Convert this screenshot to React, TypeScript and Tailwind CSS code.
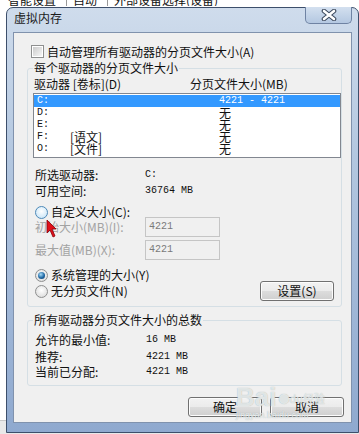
import React from 'react';

const mono = "font-['Liberation_Mono',monospace] text-[10px]";

function Radio({ checked = false, hover = false }: { checked?: boolean; hover?: boolean }) {
  return (
    <span
      className={`flex h-[13px] w-[13px] shrink-0 items-center justify-center rounded-full border ${
        hover
          ? 'border-[#4d89b8] bg-[radial-gradient(circle_at_50%_40%,#ffffff,#bfe0f6)]'
          : 'border-[#8e8f8f] bg-[radial-gradient(circle_at_50%_40%,#ffffff,#d6d6d6)]'
      }`}
    >
      {checked && (
        <span className="h-[7px] w-[7px] rounded-full bg-[radial-gradient(circle_at_40%_35%,#a8dcf8,#1f68a4_55%,#0e3660)]" />
      )}
    </span>
  );
}

function Button({ children, w = 'w-[74px]' }: { children: React.ReactNode; w?: string }) {
  return (
    <div
      className={`flex h-[20px] ${w} items-center justify-center rounded-[3px] border border-[#707070] bg-[linear-gradient(#f2f2f2_0%,#ebebeb_50%,#dddddd_50%,#cfcfcf_100%)] leading-[12px] shadow-[inset_0_0_0_1px_#fcfcfc]`}
    >
      {children}
    </div>
  );
}

function Group({ title, className, children }: { title: string; className: string; children: React.ReactNode }) {
  return (
    <fieldset className={`ml-[13px] w-[315px] rounded-[3px] border border-[#d5dfe5] ${className}`}>
      <legend className="ml-[5px] h-[12px] px-[1px] leading-[12px]">{title}</legend>
      {children}
    </fieldset>
  );
}

const drives = [
  { d: 'C:', label: '', size: '4221 - 4221', sel: true },
  { d: 'D:', label: '', size: '无' },
  { d: 'E:', label: '', size: '无' },
  { d: 'F:', label: '[语文]', size: '无' },
  { d: 'O:', label: '[文件]', size: '无' },
];

export default function App() {
  return (
    <div className="relative h-[434px] w-[359px] overflow-hidden bg-[#e9e9e9] font-['Noto_Sans_CJK_SC',sans-serif] text-[12px] text-[#111]">
      {/* window behind the dialog */}
      <div className="absolute left-0 top-0 h-[421px] w-[359px] border-b border-[#c8c8c8] bg-white">
        <div className="flex h-[6px] overflow-hidden pl-[8px] text-[12px] leading-[12px]">
          <div className="-mt-[6px] flex gap-[10px] whitespace-nowrap">
            <span>智能设置</span>
            <span className="border-l border-[#9a9a9a] pl-[6px]">自动</span>
            <span className="border-l border-[#9a9a9a] pl-[6px]">外部设备选择(设备)</span>
          </div>
        </div>
      </div>

      {/* dialog window */}
      <div className="absolute left-[6px] top-[7px] flex h-[426px] w-[353px] flex-col rounded-t-[7px] border border-[#3d4f6b] bg-[linear-gradient(#cfdcec,#b3c7e0_35%,#8fa9cf)] px-[6px] pb-[9px]">
        <div className="flex h-[24px] items-start">
          <span className="mt-[4px] pl-[1px] leading-[12px] text-[#1b1b1b]">虚拟内存</span>
          <div className="-mt-[1px] ml-auto flex h-[17px] w-[47px] items-center justify-center rounded-b-[5px] border border-t-0 border-[#6f83a3] bg-[linear-gradient(#d3e0ef,#b4c8e1)]">
            <svg width="16" height="12" viewBox="0 0 16 12">
              <path d="M3 2 L13 10 M13 2 L3 10" stroke="#3a475b" strokeWidth="4.6" strokeLinecap="round" />
              <path d="M3 2 L13 10 M13 2 L3 10" stroke="#ffffff" strokeWidth="2.6" strokeLinecap="round" />
            </svg>
          </div>
        </div>

        {/* client area */}
        <div className="flex h-[391px] flex-col border border-[#8092ad] bg-[#f0f0f0]">
          <div className="ml-[17px] mt-[12px] flex h-[13px] items-center gap-[3px]">
            <span className="flex h-[13px] w-[13px] items-center justify-center border border-[#8e8f8f] bg-white">
              <span className="h-[9px] w-[9px] bg-[linear-gradient(135deg,#cbcbcb,#f6f6f6)]" />
            </span>
            <span className="leading-[12px]">自动管理所有驱动器的分页文件大小(A)</span>
          </div>

          <Group title="每个驱动器的分页文件大小" className="mt-[4px] h-[245px]">
            <div className="mt-[4px] flex h-[12px] pl-[6px] leading-[12px]">
              <span className="w-[156px]">驱动器 [卷标](D)</span>
              <span>分页文件大小(MB)</span>
            </div>
            <div className="ml-[5px] mt-[3px] h-[65px] w-[308px] border border-[#828790] bg-white pt-[1px]">
              {drives.map((r) => (
                <div
                  key={r.d}
                  className={`flex h-[12px] items-center pl-[3px] leading-[12px] ${r.sel ? 'bg-[#3399ff] text-white' : ''}`}
                >
                  <span className="flex w-[182px]">
                    <span className={`w-[33px] ${mono}`}>{r.d}</span>
                    <span>{r.label}</span>
                  </span>
                  <span className={r.size === '无' ? '' : mono}>{r.size}</span>
                </div>
              ))}
            </div>

            <div className="mt-[11px] flex h-[12px] items-center pl-[7px] leading-[12px]">
              <span className="w-[110px]">所选驱动器:</span>
              <span className={mono}>C:</span>
            </div>
            <div className="mt-[4px] flex h-[12px] items-center pl-[7px] leading-[12px]">
              <span className="w-[110px]">可用空间:</span>
              <span className={mono}>36764 MB</span>
            </div>

            <div className="mt-[10px] flex h-[10px] items-center gap-[3px] pl-[7px] leading-[12px]">
              <Radio hover />
              <span>自定义大小(C):</span>
            </div>
            <div className="flex h-[20px] items-center pl-[7px] leading-[12px]">
              <span className="w-[110px] text-[#a3a3a3]">初始大小(MB)(I):</span>
              <span className={`flex h-[20px] w-[75px] items-center border border-[#c5c5c5] bg-[#f0f0f0] pl-[3px] text-[#7a7a7a] ${mono}`}>
                4221
              </span>
            </div>
            <div className="mt-[3px] flex h-[20px] items-center pl-[7px] leading-[12px]">
              <span className="w-[110px] text-[#a3a3a3]">最大值(MB)(X):</span>
              <span className={`flex h-[20px] w-[75px] items-center border border-[#c5c5c5] bg-[#f0f0f0] pl-[3px] text-[#7a7a7a] ${mono}`}>
                4221
              </span>
            </div>

            <div className="mt-[9px] flex h-[12px] items-center gap-[3px] pl-[7px] leading-[12px]">
              <Radio checked />
              <span>系统管理的大小(Y)</span>
            </div>
            <div className="flex h-[20px] items-center gap-[3px] pl-[7px] leading-[12px]">
              <Radio />
              <span>无分页文件(N)</span>
              <div className="ml-auto mr-[7px]">
                <Button>设置(S)</Button>
              </div>
            </div>
          </Group>

          <Group title="所有驱动器分页文件大小的总数" className="mt-[7px] h-[72px]">
            <div className="mt-[8px] flex h-[12px] items-center pl-[7px] leading-[12px]">
              <span className="w-[111px]">允许的最小值:</span>
              <span className={mono}>16 MB</span>
            </div>
            <div className="mt-[5px] flex h-[12px] items-center pl-[7px] leading-[12px]">
              <span className="w-[111px]">推荐:</span>
              <span className={mono}>4221 MB</span>
            </div>
            <div className="mt-[3px] flex h-[12px] items-center pl-[7px] leading-[12px]">
              <span className="w-[111px]">当前已分配:</span>
              <span className={mono}>4221 MB</span>
            </div>
          </Group>

          <div className="mt-[11px] flex justify-end gap-[8px] pr-[7px]">
            <Button>确定</Button>
            <Button>取消</Button>
          </div>
        </div>
      </div>

      {/* mouse pointer */}
      <svg className="absolute left-[46px] top-[219px]" width="12" height="20" viewBox="0 0 12 20">
        <path d="M1 1 L1 14 L4 11 L7 18 L9 17 L6 10 L10 10 Z" fill="#e0101a" stroke="#8a0008" strokeWidth="0.8" />
      </svg>

      {/* watermark */}
      <div className="pointer-events-none absolute left-[236px] top-[384px] flex flex-col text-white/70">
        <div className="flex items-end gap-[2px]">
          <span className="font-['Liberation_Sans',sans-serif] text-[26px] font-bold leading-[26px] [text-shadow:0_0_1px_#9aa]">Bai</span>
          <span className="mb-[6px] text-[11px] leading-[11px] [text-shadow:0_0_1px_#9aa]">●du经验</span>
        </div>
        <span className="font-['Liberation_Sans',sans-serif] text-[9px] leading-[10px] [text-shadow:0_0_1px_#9aa]">jingyan.baidu.com</span>
      </div>
    </div>
  );
}
